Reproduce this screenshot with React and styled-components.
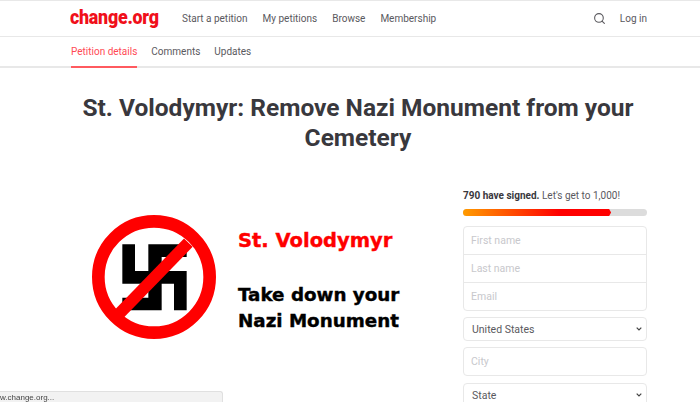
import React from "react";
import styled, { createGlobalStyle } from "styled-components";
import { FiSearch } from "react-icons/fi";

const GlobalStyle = createGlobalStyle`
  html, body {
    margin: 0;
    height: 402px;
    overflow: hidden;
    background: #fff;
    font-family: Roboto, "Liberation Sans", sans-serif;
    color: #39383d;
  }
  * { box-sizing: border-box; }
`;

const TopBar = styled.header`
  height: 37px;
  display: flex;
  align-items: center;
  padding: 0 53px 0 70px;
  border-top: 1px solid #e8e8e8;
  border-bottom: 1px solid #e8e8e8;
`;

const Logo = styled.a`
  width: 112px;
  padding-bottom: 3px;
  font-size: 21px;
  font-weight: 900;
  letter-spacing: -0.3px;
  color: #f00f1a;
  white-space: nowrap;
  transform: scaleX(0.85);
  transform-origin: left center;
`;

const NavLinks = styled.nav`
  display: flex;
  gap: 15px;
  flex: 1;
`;

const NavLink = styled.a`
  font-size: 10px;
  color: #5a595e;
`;

const Actions = styled.div`
  display: flex;
  align-items: center;
  gap: 14px;
  color: #5a595e;
`;

const Tabs = styled.div`
  height: 31px;
  display: flex;
  gap: 14px;
  padding-left: 71px;
  border-bottom: 2px solid #e8e8e8;
`;

const Tab = styled.a`
  height: 31px;
  line-height: 29px;
  font-size: 10px;
  color: ${(p) => (p.$active ? "#ff4a55" : "#5a595e")};
  border-bottom: ${(p) => (p.$active ? "2px solid #ff5a5f" : "none")};
`;

const Title = styled.h1`
  margin: 25px 0 0 58px;
  width: 600px;
  text-align: center;
  font-size: 24.5px;
  line-height: 30px;
  font-weight: 700;
  color: #39383d;
`;

const Content = styled.main`
  display: grid;
  grid-template-columns: 371px 184px;
  justify-content: start;
  padding: 36px 0 0 92px;
`;

const Poster = styled.div`
  display: flex;
  gap: 22px;
  padding-top: 26px;
  align-items: flex-start;
`;

const PosterText = styled.div`
  display: flex;
  flex-direction: column;
  font-family: "DejaVu Sans", sans-serif;
  font-weight: 700;
  font-size: 18.3px;
  line-height: 26px;
  color: #000;
  white-space: nowrap;
  padding-top: 13px;
  -webkit-text-stroke: 0.4px currentColor;
`;

const PosterRed = styled.span`
  color: #f00;
  font-size: 19.5px;
  margin-bottom: 28px;
`;

const SignBox = styled.div`
  width: 184px;
`;

const Status = styled.p`
  margin: 0 0 6px;
  font-size: 10px;
  line-height: 14px;
  color: #5a595e;
  white-space: nowrap;
  strong { color: #39383d; font-weight: 700; }
`;

const Progress = styled.div`
  height: 7px;
  border-radius: 4px;
  background: #dcdcdc;
  overflow: hidden;
  margin-bottom: 10px;
`;

const ProgressFill = styled.div`
  height: 100%;
  background: linear-gradient(90deg, #ff9b00, #ff0000 65%);
  clip-path: polygon(0 0, calc(100% - 2px) 0, 100% 50%, calc(100% - 2px) 100%, 0 100%);
`;

const Group = styled.div`
  display: flex;
  flex-direction: column;
  border: 1px solid #e8e8e8;
  border-radius: 4px;
  margin-bottom: 6px;
`;

const GroupInput = styled.input`
  height: 28px;
  border: none;
  border-bottom: 1px solid #e8e8e8;
  padding: 0 7px;
  font-family: Roboto, sans-serif;
  font-size: 10.5px;
  background: transparent;
  &:last-child { border-bottom: none; height: 27px; }
  &::placeholder { color: #c8c8cc; }
`;

const Field = styled.input`
  width: 100%;
  display: block;
  height: 29px;
  border: 1px solid #e8e8e8;
  border-radius: 4px;
  padding: 0 7px;
  margin-bottom: 7px;
  font-family: Roboto, sans-serif;
  font-size: 10.5px;
  &::placeholder { color: #c8c8cc; }
`;

const chevron =
  "data:image/svg+xml,%3Csvg xmlns='http://www.w3.org/2000/svg' width='6' height='4' viewBox='0 0 6 4'%3E%3Cpath d='M.7.7 3 3l2.3-2.3' fill='none' stroke='%23444' stroke-width='1.2'/%3E%3C/svg%3E";

const Select = styled.select`
  appearance: none;
  width: 100%;
  display: block;
  height: 24px;
  border: 1px solid #e8e8e8;
  border-radius: 4px;
  padding: 0 8px;
  margin-bottom: 6px;
  background: #fff url("${chevron}") no-repeat right 4px center;
  color: #5a595e;
  font-family: Roboto, sans-serif;
  font-size: 10.5px;
`;

const LinkBubble = styled.div`
  position: fixed;
  left: 0;
  bottom: 0;
  width: 223px;
  height: 11px;
  background: #f2f2f2;
  border: 1px solid #e0e0e0;
  border-width: 1px 1px 0 0;
  border-top-right-radius: 3px;
  font-family: "Liberation Sans", sans-serif;
  font-size: 8px;
  line-height: 11px;
  color: #444;
  white-space: nowrap;
`;

const NoSymbol = () => (
  <svg width="124" height="124" viewBox="36 42 372 372" style={{ flex: "none" }}>
    <path
      fill="#000"
      d="M127 130h38v80h40v-80h115v38h-75v42h75v118h-38v-80h-37v80H127v-38h78v-42h-78z"
    />
    <circle cx="222" cy="228" r="167" fill="none" stroke="#f00" strokeWidth="38" />
    <path d="M118 338 325 125" stroke="#f00" strokeWidth="36" />
  </svg>
);

export default function App() {
  return (
    <>
      <GlobalStyle />
      <TopBar>
        <Logo>change.org</Logo>
        <NavLinks>
          <NavLink>Start a petition</NavLink>
          <NavLink>My petitions</NavLink>
          <NavLink>Browse</NavLink>
          <NavLink>Membership</NavLink>
        </NavLinks>
        <Actions>
          <FiSearch size={13} />
          <NavLink>Log in</NavLink>
        </Actions>
      </TopBar>
      <Tabs>
        <Tab $active>Petition details</Tab>
        <Tab>Comments</Tab>
        <Tab>Updates</Tab>
      </Tabs>
      <Title>St. Volodymyr: Remove Nazi Monument from your Cemetery</Title>
      <Content>
        <Poster>
          <NoSymbol />
          <PosterText>
            <PosterRed>St. Volodymyr</PosterRed>
            <span>Take down your</span>
            <span>Nazi Monument</span>
          </PosterText>
        </Poster>
        <SignBox>
          <Status>
            <strong>790 have signed.</strong> Let's get to 1,000!
          </Status>
          <Progress>
            <ProgressFill style={{ width: `${(790 / 1000) * 100 + 1.5}%` }} />
          </Progress>
          <Group>
            <GroupInput placeholder="First name" />
            <GroupInput placeholder="Last name" />
            <GroupInput placeholder="Email" />
          </Group>
          <Select defaultValue="United States">
            <option>United States</option>
          </Select>
          <Field placeholder="City" />
          <Select defaultValue="State">
            <option>State</option>
          </Select>
        </SignBox>
      </Content>
      <LinkBubble>w.change.org...</LinkBubble>
    </>
  );
}
